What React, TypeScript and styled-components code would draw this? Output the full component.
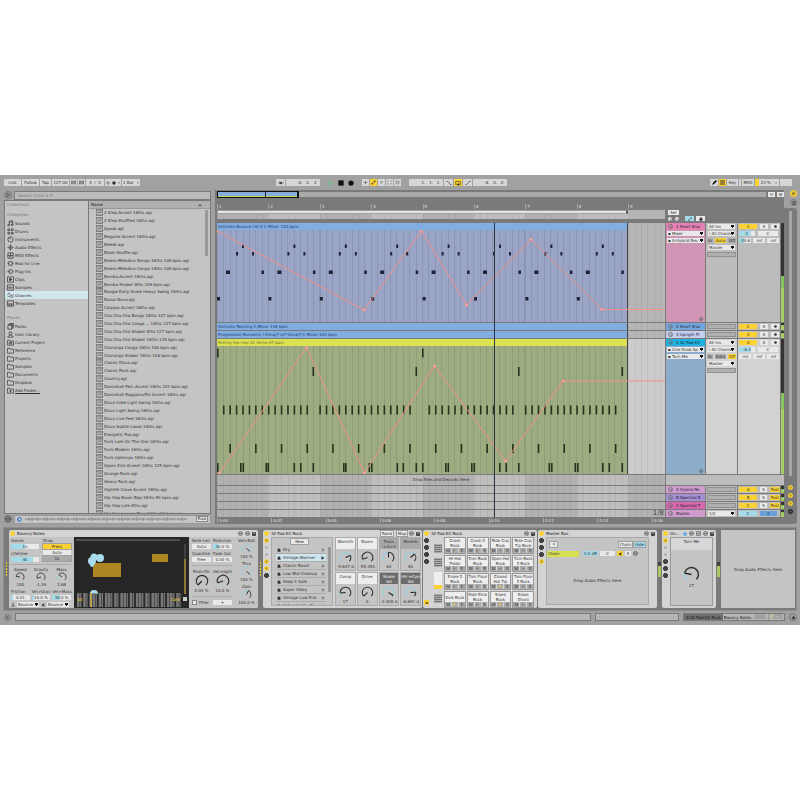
import React from "react";
import styled, { createGlobalStyle, css } from "styled-components";

const C = {
  chrome: "#a1a1a1",
  dark: "#7a7a7a",
  panel: "#c4c4c4",
  control: "#d6d6d6",
  field: "#e9e9e9",
  ink: "#303030",
  yellow: "#fad233",
  cyan: "#a3dbea",
  auto: "#f3918a",
};

const Global = createGlobalStyle`
  * { box-sizing: border-box; }
  body { margin: 0; background: #fff; font-family: "DejaVu Sans", Inter, sans-serif; font-size: 4px; line-height: 5px; color: ${C.ink}; text-rendering: geometricPrecision; }
  button, input, select { font: inherit; color: inherit; text-rendering: inherit; margin: 0; padding: 0; border: 0; border-radius: 0; background: none; min-width: 0; }
  select { appearance: none; }
  ul { list-style: none; margin: 0; padding: 0; }
  svg { display: block; flex: none; }
`;

const Page = styled.div`
  min-height: 100vh;
  display: flex;
  flex-direction: column;
  justify-content: center;
`;
const Shell = styled.main`
  background: ${C.chrome};
  overflow: hidden;
`;

/* ---------- icons ---------- */
const icons: Record<string, React.ReactNode> = {
  sounds: <><path d="M5 12V3l8-1v9M5 5l8-1" /><circle cx="3.5" cy="12" r="2" /><circle cx="11.5" cy="11" r="2" /></>,
  drums: <><path d="M2 2h4v4H2zM10 2h4v4h-4zM2 10h4v4H2zM10 10h4v4h-4z" /></>,
  instruments: <><circle cx="8" cy="8" r="6" /><path d="M8 8L5 3" /></>,
  audio: <><path d="M1 8h3M5 4v8M8 1v14M11 4v8M12 8h3" /></>,
  midi: <><path d="M2 2h12v12H2zM2 8h12M8 2v6M5 11h5" /></>,
  max: <><path d="M4 4h8v8H4zM1 8h3M12 8h3" /></>,
  plug: <><path d="M5 4h4a4 4 0 010 8H5zM1 8h4M13 8h2" /></>,
  clips: <><path d="M1 2h14v12H1z" /><path d="M6 5l5 3-5 3z" fill="currentColor" /></>,
  samples: <><path d="M1 2h14v12H1zM4 7v3M6.500 5v6M9 6v5M12 7v3" /></>,
  grooves: <><path d="M1 6c3-4 5-4 7 0s4 3 7-1M1 12c3-4 5-3 7-1s4 2 7-1" /></>,
  templates: <><path d="M1 2h14v12H1zM1 9h14M5 9v5M10 9v5" /></>,
  packs: <><path d="M2 5h9v9H2zM4 5V3h9v9h-2M6 3V1h9v8h-2" /></>,
  user: <><circle cx="8" cy="5" r="3.500" /><path d="M2 14c0-6 12-6 12 0z" /></>,
  project: <><path d="M1 3h5l1 2h8v9H1zM5 8h6v3H5z" /></>,
  folder: <><path d="M1 3h5l1 2h8v9H1z" /></>,
  addFolder: <><path d="M1 3h5l1 2h8v9H1zM8 7v5M5.500 9.500h5" /></>,
  groove: <><path d="M0 2h16v12H0zM3 9l2.500-2L8 9l2.500-3L13 8" /></>,
  play: <path d="M5 3l8 5-8 5z" />,
  playFill: <path d="M2 1l12 7-12 7z" fill="currentColor" stroke="none" />,
  down: <path d="M2 4h12l-6 9z" fill="currentColor" stroke="none" />,
  up: <path d="M3 11l5-7 5 7z" />,
  circle: <circle cx="8" cy="8" r="5" fill="none" />,
  dot: <circle cx="8" cy="8" r="7" fill="currentColor" stroke="none" />,
  square: <path d="M1 1h14v14H1z" fill="currentColor" stroke="none" />,
  disk: <><path d="M1 1h14v14H1z" fill="currentColor" /><path d="M6 3h5v4H6z" fill="#fff" stroke="none" /></>,
  swap: <><circle cx="8" cy="8" r="6.500" /><path d="M4 8h8M6 5L4 8l2 3M10 5l2 3-2 3" /></>,
  follow: <><path d="M1 8h14M5 4v8M9 5L5 8l4 3z" fill="currentColor" /></>,
  plus: <path d="M8 3v10M3 8h10" />,
  automation: <><path d="M3 13L13 4" /><circle cx="4" cy="12" r="2" /><circle cx="12" cy="4" r="2" /></>,
  minus: <path d="M4 6h8M5 10h4" />,
  dashed: <path d="M2 5V3h3M11 3h3v2M2 11v2h3M11 13h3v-2" />,
  punchIn: <path d="M1 4h4l6 8h4" />,
  punchOut: <path d="M1 12h4l6-8h4" />,
  loop: <><path d="M5 12H2V4h12v8H9" /><path d="M10 9l-4 3 4 3z" fill="currentColor" /></>,
  pencil: <path d="M2 14l2-5 8-8 3 3-8 8z" fill="currentColor" />,
  keys: <path d="M1 2h14v12H1zM5 2v12M8 2v12M11 2v12" />,
  nudge: <path d="M2 2v12M6 2v12M10 2v12M14 2v12" />,
  lines: <path d="M3 4h10M3 8h10M3 12h10" />,
  lock: <path d="M3 7h10v7H3zM5 7V3h6v4" fill="currentColor" />,
  home: <path d="M8 3l5 9H3z" fill="currentColor" />,
  headphone: <path d="M5 6h3l4-4v12l-4-4H5z" fill="currentColor" />,
};
const Icon = ({ name, size = 5, weight = 1.6 }: { name: string; size?: number; weight?: number }) => (
  <svg width={size} height={size} viewBox="0 0 16 16" fill="none" stroke="currentColor" strokeWidth={weight} aria-hidden="true">
    {icons[name]}
  </svg>
);

const RoundButton = styled.button<{ $bg?: string; $fg?: string; $size?: number }>`
  width: ${(p) => p.$size ?? 5}px;
  height: ${(p) => p.$size ?? 5}px;
  flex: none;
  border-radius: 50%;
  display: grid;
  place-items: center;
  background: ${(p) => p.$bg ?? "transparent"};
  color: ${(p) => p.$fg ?? C.ink};
  border: 1px solid ${(p) => p.$bg ?? "#777"};
`;

/* ---------- transport ---------- */
const Transport = styled.header`
  display: grid;
  grid-template-columns: 272fr 434fr 86fr;
  align-items: center;
  height: 15px;
  padding: 0 4px;
`;
const Group = styled.div<{ $gap?: number; $left?: number }>`
  display: flex;
  align-items: center;
  gap: ${(p) => p.$gap ?? 1}px;
  margin-left: ${(p) => p.$left ?? 0}px;
`;
const Tool = styled.button<{ $w: number; $on?: boolean; $bare?: boolean; $fg?: string }>`
  width: ${(p) => p.$w}px;
  height: 7px;
  flex: none;
  display: flex;
  align-items: center;
  justify-content: center;
  gap: 2px;
  white-space: pre;
  color: ${(p) => p.$fg ?? C.ink};
  background: ${(p) => (p.$bare ? "transparent" : p.$on ? C.yellow : C.control)};
`;

const TransportBar = () => (
  <Transport>
    <Group>
      <Tool $w={17}>Link</Tool>
      <Tool $w={17}>Follow</Tool>
      <Tool $w={11}>Tap</Tool>
      <Tool $w={17}>127.00</Tool>
      <Tool $w={7} aria-label="Nudge down"><Icon name="nudge" weight={2} /></Tool>
      <Tool $w={7} aria-label="Nudge up"><Icon name="nudge" weight={2} /></Tool>
      <Tool $w={18}>4  /  4</Tool>
      <Tool $w={16} aria-label="Metronome"><Icon name="circle" size={4} weight={2} /><Icon name="dot" size={4} /><Icon name="down" size={2} /></Tool>
      <Tool $w={18}>1 Bar <Icon name="down" size={2} /></Tool>
    </Group>
    <Group $gap={8}>
      <Group>
        <Tool $w={9} aria-label="Follow arrow"><Icon name="follow" size={6} /></Tool>
        <Tool $w={34}>       6.   2.   3</Tool>
      </Group>
      <Group $gap={4}>
        <Tool $w={6} $bare $fg="#79c093" aria-label="Play"><Icon name="playFill" size={6} /></Tool>
        <Tool $w={6} $bare $fg="#111" aria-label="Stop"><Icon name="square" size={6} /></Tool>
        <Tool $w={6} $bare $fg="#111" aria-label="Record"><Icon name="dot" size={6} /></Tool>
      </Group>
      <Group>
        {["plus", "automation", "minus", "dashed", "circle"].map((n) => (
          <Tool key={n} $w={7} $on={n === "automation"} aria-label={n}><Icon name={n} /></Tool>
        ))}
      </Group>
      <Group>
        <Tool $w={34}>       1.   1.   1</Tool>
        <Tool $w={9} aria-label="Punch in"><Icon name="punchIn" size={6} /></Tool>
        <Tool $w={8} $on aria-label="Loop"><Icon name="loop" size={6} /></Tool>
        <Tool $w={9} aria-label="Punch out"><Icon name="punchOut" size={6} /></Tool>
        <Tool $w={34}>       8.   0.   0</Tool>
      </Group>
    </Group>
    <Group>
      <Tool $w={8} $fg="#111" aria-label="Draw"><Icon name="pencil" /></Tool>
      <Tool $w={7} $on aria-label="Keyboard"><Icon name="keys" /></Tool>
      <Tool $w={11}>Key</Tool>
      <Tool $w={2} aria-label="In" />
      <Tool $w={12}>MIDI</Tool>
      <Group $gap={0}>
        <Tool $w={4} $on aria-label="Load" />
        <Tool $w={20}>23 %  <Icon name="down" size={2} /></Tool>
      </Group>
      <Tool $w={12} aria-label="Disk" />
    </Group>
  </Transport>
);

/* ---------- browser ---------- */
const Main = styled.div`
  display: flex;
  padding-left: 4px;
`;
const Browser = styled.aside`
  flex: 0 0 207px;
  min-width: 0;
  display: flex;
  flex-direction: column;
  margin-right: 4px;
`;
const SearchRow = styled.div`
  display: flex;
  align-items: center;
  gap: 2px;
  height: 10px;
`;
const SearchInput = styled.input`
  flex: 1;
  height: 9px;
  padding: 0 3px;
  border: 1px solid ${C.dark};
  background: #bcbcbc;
  &::placeholder { color: #777; }
`;
const BrowserPanel = styled.div`
  flex: 1;
  min-height: 0;
  display: grid;
  grid-template-columns: 84px minmax(0, 1fr);
  border: 1px solid ${C.dark};
  background: ${C.panel};
`;
const Sidebar = styled.nav`
  border-right: 1px solid ${C.dark};
  padding-left: 2px;
`;
const SideHead = styled.div<{ $top?: number }>`
  height: 8px;
  line-height: 8px;
  margin-top: ${(p) => p.$top ?? 0}px;
  color: #777;
`;
const SideItem = styled.button<{ $on?: boolean; $link?: boolean }>`
  display: flex;
  align-items: center;
  gap: 1px;
  width: calc(100% + 2px);
  height: 8px;
  margin-left: -2px;
  padding-left: 2px;
  background: ${(p) => (p.$on ? "#d3e6ed" : "transparent")};
  text-decoration: ${(p) => (p.$link ? "underline" : "none")};
`;
const FileColumn = styled.div`
  display: flex;
  flex-direction: column;
  min-height: 0;
`;
const ColumnHead = styled.div`
  display: flex;
  align-items: center;
  justify-content: space-between;
  height: 8px;
  padding: 0 8px 0 2px;
  background: #b0b0b0;
  border-bottom: 1px solid #999;
  color: #111;
`;
const FileArea = styled.div`
  flex: 1 1 0;
  min-height: 0;
  display: grid;
  grid-template-columns: minmax(0, 1fr) 3px;
  overflow: hidden;
  padding-right: 2px;
`;
const FileList = styled.ul`
  display: grid;
  grid-auto-rows: minmax(0, 1fr);
  margin-bottom: -4px;
  min-height: 0;
`;
const FileItem = styled.li`
  display: flex;
  align-items: center;
  gap: 1px;
  padding-left: 7px;
  white-space: nowrap;
`;
const Thumb = styled.div<{ $h: string }>`
  height: ${(p) => p.$h};
  margin-top: 1px;
  background: #989898;
`;
const Preview = styled.div`
  display: flex;
  align-items: center;
  gap: 2px;
  height: 10px;
  & > div { flex: 1; min-width: 0; display: flex; align-items: center; gap: 3px; height: 9px; padding: 0 2px; background: ${C.panel}; border: 1px solid #999; }
`;
const Raw = styled.button`
  width: 12px;
  height: 6px;
  flex: none;
  margin-left: auto;
  background: ${C.field};
  border: 1px solid #888;
  line-height: 4px;
`;

const categories = [["sounds", "Sounds"], ["drums", "Drums"], ["instruments", "Instruments"], ["audio", "Audio Effects"], ["midi", "MIDI Effects"], ["max", "Max for Live"], ["plug", "Plug-Ins"], ["clips", "Clips"], ["samples", "Samples"], ["grooves", "Grooves"], ["templates", "Templates"]];
const places = [["packs", "Packs"], ["user", "User Library"], ["project", "Current Project"], ["folder", "Reference"], ["folder", "Projects"], ["folder", "Samples"], ["folder", "Documents"], ["folder", "Dropbox"], ["addFolder", "Add Folder..."]];
const files = ["2 Step Accent 16ths", "2 Step Shuffled 16ths", "Ayoub", "Beguine Accent 16ths", "Beledi", "Blues Shuffle", "Bolero Melodico Bongo 16ths 106 bpm", "Bolero Melodico Conga 16ths 106 bpm", "Bomba Accent 16ths", "Bomba Shaker 8ths 109 bpm", "Boogie Early Snare Heavy Swing 16ths", "Bossa Nova", "Calypso Accent 16ths", "Cha-Cha-Cha Bongo 16ths 127 bpm", "Cha-Cha-Cha Conga ... 16ths 127 bpm", "Cha-Cha-Cha Shaker 8ths 127 bpm", "Cha-Cha-Cha Shaker 16ths 128 bpm", "Charanga Conga 16ths 106 bpm", "Charanga Shaker 16ths 106 bpm", "Classic Disco", "Classic Rock", "Country", "Dancehall Perc Accent 16ths 101 bpm", "Dancehall Raggamuffin Accent 16ths", "Disco Indie Light Swing 16ths", "Disco Light Swing 16ths", "Disco Live Feel 16ths", "Disco Subtle Loose 16ths", "Energetic Pop", "Funk Late On The One 16ths", "Funk Modern 16ths", "Funk Uptempo 16ths", "Gqom Kick Accent 16ths 125 bpm", "Grunge Rock", "Heavy Rock", "Highlife Clave Accent 16ths", "Hip Hop Boom Bap 16ths 90 bpm", "Hip Hop Late 8ths", "Hip Hop Legacy Flow 16ths 90 bpm"];

const wave = Array.from({ length: 54 }, (_, i) => `M${i * 3 + 1} ${4 - ((i * 7) % 5) / 2.5}v${((i * 7) % 5) / 1.25 + 0.5}`).join("");

const BrowserPane = () => (
  <Browser>
    <SearchRow>
      <RoundButton $size={8} aria-label="Toggle browser"><Icon name="play" size={6} /></RoundButton>
      <SearchInput aria-label="Search" placeholder="Search (Cmd + F)" />
    </SearchRow>
    <BrowserPanel>
      <Sidebar>
        <SideHead>Collections</SideHead>
        <SideHead $top={2}>Categories</SideHead>
        {categories.map(([i, t]) => <SideItem key={t} $on={t === "Grooves"}><Icon name={i} size={7} />{t}</SideItem>)}
        <SideHead $top={7}>Places</SideHead>
        {places.map(([i, t]) => <SideItem key={t} $link={i === "addFolder"}><Icon name={i} size={7} />{t}</SideItem>)}
      </Sidebar>
      <FileColumn>
        <ColumnHead>Name<Icon name="up" size={4} /></ColumnHead>
        <FileArea>
          <FileList>{files.map((f) => <FileItem key={f}><Icon name="groove" size={7} />{f}.agr</FileItem>)}</FileList>
          <Thumb $h="15%" />
        </FileArea>
      </FileColumn>
    </BrowserPanel>
    <Preview>
      <RoundButton $size={8} aria-label="Preview"><Icon name="swap" size={6} /></RoundButton>
      <div>
        <RoundButton $bg="#4f7fc9" $fg="#fff" aria-label="Preview on"><Icon name="headphone" size={3} /></RoundButton>
        <svg width="162" height="8" viewBox="0 0 162 8"><path d="M0 4h162" stroke="#777" strokeWidth="0.600" /><path d={wave} stroke="#666" strokeWidth="0.700" /></svg>
        <Raw>Raw</Raw>
      </div>
    </Preview>
  </Browser>
);

/* ---------- arrangement ---------- */
const Arrangement = styled.section`
  flex: 1;
  min-width: 0;
  position: relative;
  display: flex;
  flex-direction: column;
  gap: 1px;
  padding: 0 0 1px 2px;
  background: ${C.dark};
`;
const OverviewRow = styled.div`
  display: flex;
  align-items: center;
  gap: 1px;
  height: 8px;
`;
const Overview = styled.div`
  flex: 1;
  height: 5px;
  background: #a9a9a9;
  & > div { width: 15%; height: 7px; margin-top: -1px; border: 1px solid #111; background: linear-gradient(#86add9 0 70%, #c9d65c 70%); border-right-width: 2px; display: grid; place-items: stretch center; }
  & > div > i { width: 1px; margin-left: 20%; background: #223; }
`;
const MiniButton = styled.button<{ $w?: number; $bg?: string; $fg?: string; $border?: boolean }>`
  width: ${(p) => (p.$w ? `${p.$w}px` : "auto")};
  height: 5px;
  flex: none;
  line-height: 5px;
  display: flex;
  align-items: center;
  justify-content: center;
  white-space: nowrap;
  color: ${(p) => p.$fg ?? C.ink};
  background: ${(p) => p.$bg ?? C.field};
  box-shadow: 0 0 0 ${(p) => (p.$border ? 1 : 0)}px #a0a0a0;
`;
const Split = styled.div<{ $h: number }>`
  display: grid;
  grid-template-columns: minmax(0, 1fr) 118px;
  gap: 1px;
  min-height: ${(p) => p.$h}px;
`;
const zebra = css`
  background-image:
    repeating-linear-gradient(90deg, rgba(0,0,0,0.06) 0 1px, transparent 1px 1.434%),
    repeating-linear-gradient(90deg, rgba(0,0,0,0.05) 0 11.47%, rgba(255,255,255,0.06) 11.47% 22.94%);
`;
const Lane = styled.div<{ $light?: boolean }>`
  position: relative;
  display: grid;
  grid-template-columns: 411fr 37fr;
  background-color: ${(p) => (p.$light ? "#cccccc" : "#b6b6b6")};
  background-image: repeating-linear-gradient(90deg, rgba(0,0,0,0.06) 0 1px, transparent 1px 1.434%);
`;
const ZebraLane = styled.div`
  background-color: #bababa;
  ${zebra}
  text-align: center;
  line-height: 10px;
`;
const Ruler = styled.div<{ $step: number }>`
  display: grid;
  grid-auto-flow: column;
  grid-auto-columns: ${(p) => p.$step}%;
  align-items: end;
  overflow: hidden;
  color: #e2e2e2;
  & > span { border-left: 1px solid #a5a5a5; padding-left: 1px; line-height: 5px; height: 5px; white-space: nowrap; }
`;
const LoopLane = styled.div`
  display: grid;
  grid-template-columns: 411fr 37fr;
  grid-template-rows: 4px 5px;
  & > div:nth-child(1) { background: #e3e3e3; border: 1px solid #a0a0a0; border-right: 2px solid #555; }
  & > div:nth-child(2) { background: #b4b4b4; grid-row: 1 / 3; grid-column: 2; }
  & > div:nth-child(3) { background-color: #bababa; ${zebra} background-size: 109% 100%; }
`;
const HeadTools = styled.div`
  display: flex;
  flex-direction: column;
  gap: 1px;
  padding-left: 2px;
`;
const Clip = styled.div<{ $body: string; $title: string; $fg: string }>`
  display: grid;
  grid-template-rows: 7px 1fr;
  background: ${(p) => p.$body};
  border-right: 1px solid #444;
  color: ${(p) => p.$fg};
  background-image: repeating-linear-gradient(90deg, rgba(20,30,60,0.11) 0 1px, transparent 1px 1.5625%);
  & > div { background: ${(p) => p.$title}; line-height: 7px; padding-left: 1px; white-space: nowrap; overflow: hidden; }
`;
const LaneDrawing = styled.svg`
  position: absolute;
  inset: 7px 0 0 0;
  width: 100%;
  height: calc(100% - 7px);
`;
const Playhead = styled.div`
  position: absolute;
  top: 33px;
  bottom: 7px;
  left: calc(2px + (100% - 121px) * 0.619);
  width: 1px;
  background: #2b3440;
`;
const GridSize = styled.div`
  position: absolute;
  right: 120px;
  bottom: 7px;
  font-size: 7px;
  line-height: 8px;
  color: #444;
`;

type Pt = [number, number];
const Automation = ({ points }: { points: Pt[] }) => (
  <>
    <polyline points={points.map((p) => p.join(",")).join(" ")} fill="none" stroke={C.auto} strokeWidth="1" vectorEffect="non-scaling-stroke" />
    {points.slice(0, -1).map(([x, y]) => <circle key={x} cx={x} cy={y} r="1.300" fill="#f6aca4" stroke={C.auto} strokeWidth="0.500" />)}
  </>
);
const BAR = 51.4;
const bounce = Array.from({ length: 8 }, (_, b) => {
  const x = b * BAR;
  return [[x, 67, 3, 3.5], [x + 9, 40.5, 4, 3.5], [x + 19, 22, 2, 3.5], [x + 25, 14.500, 2, 3.500], [x + 35, 22, 2, 3.500], [x + 44.500, 40.500, 2.500, 3.500]];
}).flat();
const range = (a: number, b: number, step = 1) => Array.from({ length: Math.floor((b - a) / step) + 1 }, (_, i) => a + i * step);
const S = 6.425;
const drums = [
  ...[0, 205].map((x) => [x, 2.5]),
  ...[95.5, 198.5, 301, 404.5].map((x) => [x, 21]),
  ...[...range(1, 14), ...range(16, 30), ...range(33, 46), ...range(48, 62)].map((i) => [i * S - 0.5, 59.5]),
  ...range(2, 62, 4).map((i) => [i * S - 0.5, 98]),
  ...[0, 23, 25.500, 48.500, 50.500, 76.500, 83, 95.500, 126, 128, 151.500, 154, 179.500, 185.500, 198.500, 205, 228, 230.500, 254, 256.500, 282, 288.500, 301, 331.500, 334, 357.500, 360, 385, 391.500, 404.500].map((x) => [x, 117]),
];

const TrackHead = styled.div`
  display: grid;
  grid-template-columns: 39px 31px minmax(0, 1fr) 3px;
  gap: 1px;
`;
const NameCell = styled.div<{ $bg: string; $title: string }>`
  display: flex;
  flex-direction: column;
  gap: 2px;
  background: ${(p) => p.$bg};
  & > header { display: flex; align-items: center; gap: 3px; height: 7px; margin-bottom: -1px; padding-left: 2px; background: ${(p) => p.$title}; white-space: nowrap; overflow: hidden; color: #23232f; }
  & > footer { margin-top: auto; align-self: flex-end; padding: 0 2px 1px; }
`;
const Cell = styled.div<{ $bg?: string }>`
  display: flex;
  flex-direction: column;
  gap: 2px;
  padding: 1px;
  background: ${(p) => p.$bg ?? "#bcbcbc"};
`;
const Line = styled.div`
  display: grid;
  grid-template-columns: 6fr 11fr 8fr;
  gap: 2px;
`;
const Choice = styled.select<{ $w?: number }>`
  width: ${(p) => (p.$w ? `${p.$w}px` : "auto")};
  height: 5px;
  line-height: 5px;
  padding-left: 1px;
  margin: 0 1px;
  background-color: ${C.field};
  background-image: conic-gradient(from -35deg at 50% 100%, #111 0 70deg, transparent 70deg);
  background-position: right 1px center;
  background-size: 3px 3px;
  background-repeat: no-repeat;
`;
const Slot = styled.div`
  height: 5px;
  background: #b0b0b0;
  border: 1px solid #909090;
`;
const Meter = styled.div<{ $level: number }>`
  background: linear-gradient(#333 0 ${(p) => 100 - p.$level}%, #86c45f ${(p) => 100 - p.$level}% ${(p) => 112 - p.$level}%, #a8cf63 ${(p) => 112 - p.$level}%);
`;

const Pick = ({ label, w }: { label: string; w?: number }) => (
  <Choice $w={w} aria-label={label} defaultValue={label}><option>{label}</option></Choice>
);

type TrackProps = { name: string; n: string; title: string; body?: string; sends?: string[]; light?: boolean; level: number; values?: string[]; post?: string; master?: boolean; off?: boolean };
const TrackControls = ({ name, n, title, body, sends, light, level, values, post, master, off }: TrackProps) => {
  const bg = light ? "#d2d2d2" : "#bcbcbc";
  return (
    <TrackHead>
      <NameCell $bg={body ?? title} $title={title}>
        <header><RoundButton aria-label={`Unfold ${name}`}><Icon name="down" size={2} /></RoundButton>{name}</header>
        {sends?.map((s) => <Pick key={s} label={s} />)}
        {sends && <footer><RoundButton $size={4} aria-label="Add lane"><Icon name="plus" size={3} /></RoundButton></footer>}
      </NameCell>
      <Cell $bg={bg}>
        {sends ? (
          <>
            <Pick label="All Ins" />
            <Pick label="⁞ All Channe" />
            <Line>
              <MiniButton $bg="#aaa">In</MiniButton>
              <MiniButton $bg={off ? "#aaa" : C.yellow}>Auto</MiniButton>
              <MiniButton $bg={off ? C.yellow : "#aaa"}>Off</MiniButton>
            </Line>
            <Pick label="Master" />
            <Slot />
          </>
        ) : master ? <Pick label="1/2" /> : <Slot />}
      </Cell>
      <Cell $bg={bg}>
        <Group $gap={3}>
          <MiniButton $w={18} $bg={master ? C.cyan : C.yellow}>{n}</MiniButton>
          {master ? <MiniButton $w={17} $bg="#6b9fdc">0</MiniButton> : (
            <><MiniButton $w={post ? 7 : 8}>S</MiniButton><MiniButton $w={post ? 10 : 8} $bg={post ? C.yellow : undefined} aria-label="Arm">{post ?? <Icon name="dot" size={3} />}</MiniButton></>
          )}
        </Group>
        {values && (
          <>
            <Group $gap={3}><MiniButton $w={16} $bg={`linear-gradient(90deg, ${C.cyan} 75%, ${C.field} 75%)`}>{values[0]}</MiniButton><MiniButton $w={20}>C</MiniButton></Group>
            <Group $gap={2}>{values.slice(1).map((v, i) => <MiniButton key={i} $w={12} $bg={i === 0 && v !== "-inf" ? `linear-gradient(90deg, ${C.cyan} 45%, ${C.field} 45%)` : undefined}>{v}</MiniButton>)}</Group>
          </>
        )}
      </Cell>
      <Meter $level={level} />
    </TrackHead>
  );
};

const ArrangementView = () => (
  <Arrangement>
    <OverviewRow>
      <Overview><div><i /></div></Overview>
      <Group $left={1}><MiniButton $w={7}>H</MiniButton><span /><MiniButton $w={7}>W</MiniButton></Group>
    </OverviewRow>
    <Split $h={10}>
      <Ruler $step={11.47}>{range(1, 9).map((n) => <span key={n}>{n}</span>)}</Ruler>
      <span />
    </Split>
    <Split $h={9}>
      <LoopLane><div /><div /><div /></LoopLane>
      <HeadTools>
        <Group><MiniButton $w={11}>Set</MiniButton></Group>
        <Group $gap={3}>
          <RoundButton $size={4} $bg={C.field} aria-label="Previous locator"><Icon name="play" size={3} /></RoundButton>
          <RoundButton $size={4} $bg={C.field} aria-label="Next locator"><Icon name="play" size={3} /></RoundButton>
          <Group $gap={2} $left={3}><MiniButton $w={9} $bg={C.cyan} aria-label="Automation mode"><Icon name="automation" size={4} /></MiniButton><MiniButton $w={9} aria-label="Lock envelopes"><Icon name="lock" size={4} /></MiniButton></Group>
        </Group>
      </HeadTools>
    </Split>
    <Split $h={0}><span /><span /></Split>
    <Split $h={99}>
      <Lane>
        <Clip $body="#9aa4c4" $title="#82ade0" $fg="#1c3a6e"><div>Ostinato Bounce I-VI-V C Minor 120 bpm</div></Clip>
        <LaneDrawing viewBox="0 0 448 92" preserveAspectRatio="none">
          {bounce.map(([x, y, w, h], i) => <rect key={i} x={x} y={y} width={w} height={h} fill="#1d2235" />)}
          <Automation points={[[0, 1], [147, 80], [204.500, 1], [249.500, 75], [314, 9.500], [385, 79.500], [448, 79.500]]} />
        </LaneDrawing>
      </Lane>
      <TrackControls name="1 Short Stac" n="1" title="#e57fb4" body="#d094b5" sends={["▪ Mixer", "▪ A-Hybrid Rev"]} level={46} values={["C", "-20.6", "-inf", "-inf"]} />
    </Split>
    <Split $h={7}>
      <Lane><Clip $body="#82ade0" $title="#82ade0" $fg="#1c3a6e"><div>Ostinato Twisting C Minor 138 bpm</div></Clip></Lane>
      <TrackControls name="2 Short Stac" n="2" title="#74a5dd" level={70} />
    </Split>
    <Split $h={7}>
      <Lane><Clip $body="#82ade0" $title="#82ade0" $fg="#1c3a6e"><div>Progression Romantic I-IIImaj7-iv7-VImaj7 C Minor 100 bpm</div></Clip></Lane>
      <TrackControls name="3 Upright Pi" n="3" title="#c3cdee" level={70} />
    </Split>
    <Split $h={135}>
      <Lane $light>
        <Clip $body="#9eac82" $title="#dbe256" $fg="#6f7620"><div>Rolling Hip Hop 02 Verse 87 bpm</div></Clip>
        <LaneDrawing viewBox="0 0 448 128" preserveAspectRatio="none">
          {drums.map(([x, y], i) => <rect key={i} x={x} y={y} width="1.600" height="9" fill="#26331c" />)}
          <Automation points={[[2.500, 127], [89.500, 1.500], [147.500, 127], [217.500, 20], [288.500, 115], [346, 35], [448, 35]]} />
        </LaneDrawing>
      </Lane>
      <TrackControls name="4 32 Pad Kit" n="4" title="#1fb1e0" body="#8caccb" light sends={["▪ One Knob Sp", "▪ Turn Me"]} level={60} values={["-6.3", "-inf", "-inf", "-inf"]} off />
    </Split>
    <Split $h={10}>
      <ZebraLane>Drop Files and Devices Here</ZebraLane>
      <Cell />
    </Split>
    <Split $h={7}><ZebraLane /><TrackControls name="A Hybrid Re" n="A" title="#cf9bd1" level={60} post="Post" /></Split>
    <Split $h={7}><ZebraLane /><TrackControls name="B Spectral R" n="B" title="#a58fd0" level={60} post="Post" /></Split>
    <Split $h={7}><ZebraLane /><TrackControls name="C Spectral T" n="C" title="#d667ad" level={60} post="Post" /></Split>
    <Split $h={7}><ZebraLane /><TrackControls name="Master" n="C" title="#d09bcd" level={70} master /></Split>
    <Split $h={5}>
      <Ruler $step={12.13}>{["0:00", "0:02", "0:04", "0:06", "0:08", "0:10", "0:12", "0:14", "0:16"].map((t) => <span key={t}>{t}</span>)}</Ruler>
      <span />
    </Split>
    <Playhead />
    <GridSize>1/8</GridSize>
  </Arrangement>
);

const SideStrip = styled.div`
  flex: 0 0 16px;
  display: flex;
  flex-direction: column;
  align-items: flex-end;
  padding: 0 3px 0 0;
  gap: 2px;
`;
const SideTrack = styled.div`
  flex: 1;
  align-self: stretch;
  display: flex;
  flex-direction: column;
  align-items: center;
  gap: 3px;
  padding: 3px 0 10px;
  background: ${C.dark};
  border-radius: 0 3px 3px 0;
  & > i { flex: 1; width: 3px; margin-bottom: 6px; background: #a5a5a5; }
`;

/* ---------- devices ---------- */
const DeviceView = styled.section`
  display: flex;
  gap: 1px;
  margin: 3px 3px 2px;
  padding: 2px 1px;
  min-height: 83px;
  background: ${C.dark};
  border: 1px solid #8e8e8e;
`;
const Device = styled.article<{ $w: number }>`
  width: ${(p) => p.$w}px;
  flex: none;
  display: flex;
  flex-direction: column;
  background: #d3d3d3;
  border-radius: 2px;
  overflow: hidden;
`;
const DeviceHead = styled.header`
  display: flex;
  align-items: center;
  gap: 2px;
  height: 7px;
  padding: 0 2px 0 1px;
  white-space: nowrap;
  & > b { flex: 1; font-weight: 400; color: #111; }
`;
const Bounce = styled.div`
  flex: 1;
  display: grid;
  grid-template-columns: 64px 115px 1fr 23px;
  gap: 1px;
  background: ${C.panel};
`;
const Stack = styled.div<{ $gap?: number; $pad?: string; $line?: boolean }>`
  display: flex;
  flex-direction: column;
  min-width: 0;
  gap: ${(p) => p.$gap ?? 1}px;
  padding: ${(p) => p.$pad ?? "0"};
  border-bottom: ${(p) => (p.$line ? "1px solid #aaa" : "0")};
`;
const Cols = styled.div<{ $n: number; $gap?: number }>`
  display: grid;
  grid-template-columns: repeat(${(p) => p.$n}, minmax(0, 1fr));
  gap: ${(p) => p.$gap ?? 2}px;
`;
const Param = styled.label`
  display: flex;
  flex-direction: column;
  gap: 1px;
  white-space: nowrap;
`;
const CheckLabel = styled.label`
  display: flex;
  align-items: center;
  gap: 2px;
`;
const ParamInput = styled.input<{ $fill?: number }>`
  width: 100%;
  height: 5px;
  line-height: 5px;
  text-align: center;
  border: 0;
  background: linear-gradient(90deg, ${C.cyan} ${(p) => p.$fill ?? 0}%, ${C.field} ${(p) => p.$fill ?? 0}%);
`;
const Value = ({ label, value, fill }: { label: string; value: string; fill?: number }) => (
  <Param>{label}<ParamInput defaultValue={value} $fill={fill} /></Param>
);
const KnobBox = styled.label`
  display: flex;
  flex-direction: column;
  align-items: center;
  white-space: nowrap;
  & > div { position: relative; }
  input { position: absolute; inset: 0; width: 100%; height: 100%; opacity: 0; }
`;
const polar = (a: number, r = 6.5): Pt => [8 + r * Math.sin((a * Math.PI) / 180), 8 - r * Math.cos((a * Math.PI) / 180)];
const arc = (from: number, to: number) => {
  const [x1, y1] = polar(from);
  const [x2, y2] = polar(to);
  return `M${x1} ${y1}A6.5 6.5 0 ${to - from > 180 ? 1 : 0} 1 ${x2} ${y2}`;
};
const Knob = ({ label, value, at, size = 11 }: { label?: string; value: string; at: number; size?: number }) => {
  const a = -135 + at * 270;
  const [x, y] = polar(a);
  return (
    <KnobBox>
      {label}
      <div>
        <svg width={size} height={size} viewBox="0 0 16 16" fill="none" strokeWidth="1.300">
          {at > 0.02 && <path d={arc(-135, a)} stroke="#8ed0e0" />}
          {at < 0.98 && <path d={arc(a, 135)} stroke="#333" />}
          <path d={`M8 8L${x} ${y}`} stroke="#222" />
        </svg>
        <input type="range" min="0" max="1" step="any" defaultValue={at} aria-label={label ?? value} />
      </div>
      {value}
    </KnobBox>
  );
};
const LevelStrip = styled.div<{ $midi?: boolean }>`
  width: 3px;
  flex: none;
  align-self: center;
  height: 15px;
  background: ${(p) => (p.$midi ? `repeating-linear-gradient(${C.yellow} 0 2px, #665 2px 3px) center / 1px 100% no-repeat` : "linear-gradient(#444 0 25%, #a8c860 25%)")};
`;
const Dots = styled.div`
  display: flex;
  flex-direction: column;
  align-items: center;
  gap: 2px;
  padding: 1px;
`;
const DotColumn = ({ colors }: { colors: string[] }) => (
  <Dots>{colors.map((c, i) => <RoundButton key={i} $bg={c} $fg={c === "#222" ? "#ddd" : C.ink} aria-label={`View ${i + 1}`}><Icon name={c === C.yellow ? "lines" : "circle"} size={3} /></RoundButton>)}</Dots>
);
const HeadIcons = ({ pair }: { pair?: boolean }) => <>{pair && <Icon name="swap" />}<Icon name="swap" /><Icon name="disk" size={4} /></>;

const BounceDisplay = () => (
  <svg width="115" height="71" viewBox="0 0 115 71">
    <path d="M0 0h115v71H0z" fill="#262626" />
    <path d="M2 3h104" stroke="#777" />
    <path d="M111 7v50" stroke="#777" strokeWidth="0.700" /><path d="M111 22v35" stroke="#d8a92b" />
    <path d="M19 26h28v14H19zM78 17h16v8H78z" fill="#ae8523" />
    <g fill="#a9dcec"><circle cx="18" cy="24" r="4" /><circle cx="20" cy="20" r="3.500" /><circle cx="26" cy="21" r="4" /><circle cx="18" cy="28" r="2" /><path d="M16 57a4 4 0 018 0z" /></g>
    {range(0, 33).map((i) => <path key={i} d={`M${3 + i * 3.1} 56h${[1, 3].includes(i % 5) ? 1.3 : 2.6}v14h-${[1, 3].includes(i % 5) ? 1.3 : 2.6}z`} fill="#777" />)}
    <path d="M17 56v14" stroke={C.yellow} />
    <text x="3" y="64" fontSize="4" fill={C.yellow}>G0</text><text x="97" y="64" fontSize="4" fill={C.yellow}>C#8</text>
    <path d="M109 60h4v4h-4z" fill="#ccc" />
  </svg>
);
const Check = styled.input`
  appearance: none;
  width: 5px;
  height: 5px;
  background: ${C.field};
  border: 1px solid #888;
`;

const BouncyNotes = () => (
  <Device $w={249}>
    <DeviceHead><RoundButton $bg={C.yellow} aria-label="Device on" /><b>Bouncy Notes</b><HeadIcons pair /></DeviceHead>
    <Bounce>
      <Stack $gap={2} $pad="1px 2px">
        <Cols $n={2} $gap={4}>
          <Stack $gap={2}><Value label="Voices" value="1n" fill={50} /><Value label="Lifetime" value="4k" fill={80} /></Stack>
          <Stack>
            Drop
            <MiniButton $bg={C.yellow} $border>Press</MiniButton>
            <MiniButton>Auto</MiniButton>
            <MiniButton $bg="#aaa" $border>1k</MiniButton>
          </Stack>
        </Cols>
        <Stack $line />
        <Cols $n={3}>
          <Knob label="Speed" value="100" at={0.2} size={10} />
          <Knob label="Gravity" value="-1.19" at={0.1} size={10} />
          <Knob label="Mass" value="2.68" at={0.3} size={10} />
        </Cols>
        <Cols $n={3}>
          <Value label="Friction" value="0.01" fill={8} />
          <Value label="Vel>Grav" value="10.0 %" fill={10} />
          <Value label="Vel>Mass" value="30.0 %" fill={40} />
        </Cols>
        <Group $gap={1}><Icon name="user" size={4} /><Pick label="Bounce" w={22} /><Icon name="headphone" size={4} /><Pick label="Bounce" w={22} /></Group>
      </Stack>
      <BounceDisplay />
      <Stack $gap={3} $pad="1px 2px">
        <Cols $n={2}>
          <Stack $gap={2}><Value label="Note Len" value="Auto" /><Value label="Quantize" value="Free" /></Stack>
          <Stack $gap={2}><Value label="Rnd>Len" value="30.0 %" fill={30} /><Value label="Fade Out" value="0.00 %" /></Stack>
        </Cols>
        <Stack $line />
        <Cols $n={2}>
          <Knob label="Rnd>Dir" value="0.00 %" at={0} size={14} />
          <Knob label="Vel>Hght" value="10.0 %" at={0.1} size={14} />
        </Cols>
        <Stack $line />
        <Cols $n={2}>
          <CheckLabel><Check type="checkbox" />Filter</CheckLabel>
          <MiniButton>+</MiniButton>
        </Cols>
      </Stack>
      <Stack $gap={2} $pad="1px 0">
        <Knob label="Vel>Ball" value="100 %" at={0.98} />
        <Knob label="Thru" value="100 %" at={0.98} />
        <Knob label="Gain" value="100.0 %" at={0.6} />
      </Stack>
    </Bounce>
  </Device>
);

const RackBody = styled.div`
  flex: 1;
  display: flex;
  gap: 1px;
  min-height: 0;
`;
const Chains = styled.div`
  width: 62px;
  flex: none;
  display: flex;
  flex-direction: column;
  gap: 2px;
  padding: 1px 1px 0 4px;
  margin-bottom: 2px;
  border: 1px solid #aaa;
  background: ${C.panel};
`;
const ChainArea = styled.div`
  display: grid;
  grid-template-columns: minmax(0, 1fr) 3px;
  gap: 2px;
  height: 59px;
  overflow: hidden;
`;
const ChainRow = styled.li<{ $on?: boolean }>`
  display: flex;
  align-items: center;
  gap: 2px;
  height: 8px;
  padding: 0 1px;
  border-bottom: 1px solid #aaa;
  background: ${(p) => (p.$on ? "#cfe5ee" : "transparent")};
  white-space: nowrap;
  & > span { flex: 1; }
`;
const Macro = styled.div<{ $head: string; $fg?: string }>`
  display: flex;
  flex-direction: column;
  align-items: center;
  height: 34px;
  border: 1px solid #aaa;
  background: ${C.panel};
  & > header { width: 100%; height: 11px; padding-top: 1px; flex: none; text-align: center; background: ${(p) => p.$head}; color: ${(p) => p.$fg ?? C.ink}; white-space: pre; }
  & > label { margin-top: 2px; }
`;
const MacroGrid = styled.div`
  flex: 1;
  display: grid;
  grid-template-columns: repeat(4, minmax(0, 1fr));
  align-content: start;
  gap: 1px;
  padding: 0 1px;
`;
const macros: [string, string, number, string, string?][] = [
  ["Warmth", "-9.637 d", 0.75, "#ededed"], ["Boom", "-55.354", 0.1, "#ededed"], ["Trans\n-<0>+", "64", 0.5, "#a8a8a8"], ["Reverb", "80", 0.68, "#a8a8a8"],
  ["Comp", "17", 0.15, "#ededed"], ["Drive", "0", 0, "#ededed"], ["Snare\nVol", "-2.409 d", 0.95, "#6c6c6c", "#fff"], ["HH +Cym\nVol", "-6.691 d", 0.82, "#6c6c6c", "#fff"],
];
const KitRack = () => (
  <Device $w={159}>
    <DeviceHead><RoundButton $bg={C.yellow} aria-label="Device on" /><b>32 Pad Kit Rock</b><MiniButton $w={12} $border>Rand</MiniButton><span /><MiniButton $w={10} $border>Map</MiniButton><HeadIcons /></DeviceHead>
    <RackBody>
      <DotColumn colors={[C.yellow, "#d8d8d8", "#d8d8d8", C.yellow, C.yellow, "#222"]} />
      <Chains>
        <Group $gap={0} $left={15}><MiniButton $w={17} $border>New</MiniButton></Group>
        <ChainArea>
          <ul>{["Dry", "Vintage Warmer", "Classic Boost", "Low Mid Cleanup", "Keep It Safe", "Super Vibey", "Vintage Low End", "Saturated Lo-Fi"].map((t, i) => (
            <ChainRow key={t} $on={i === 1}><Icon name="lock" size={4} /><span>{t}</span><Icon name={i === 1 ? "playFill" : "play"} size={4} /></ChainRow>
          ))}</ul>
          <Thumb $h="70%" />
        </ChainArea>
      </Chains>
      <MacroGrid>
        {macros.map(([t, v, at, h, fg]) => <Macro key={t} $head={h} $fg={fg}><header>{t}</header><Knob value={v} at={at} size={13} /></Macro>)}
      </MacroGrid>
    </RackBody>
  </Device>
);

const PadGrid = styled.div`
  flex: 1;
  display: grid;
  grid-template-columns: repeat(4, minmax(0, 1fr));
  grid-auto-rows: 17px;
  align-content: start;
  gap: 1px;
  padding-right: 3px;
`;
const Pad = styled.div`
  display: flex;
  flex-direction: column;
  border: 1px solid #999;
  font-family: Inter, sans-serif;
  & > button:first-child { flex: 1; background: #eeeeee; line-height: 5px; white-space: pre; }
`;
const PadKeys = styled.div`
  display: grid;
  grid-template-columns: 1fr 1fr 1fr;
  gap: 1px;
  height: 5px;
`;
const PadKey = styled.button<{ $on?: boolean; $icon?: boolean }>`
  display: grid;
  place-items: center;
  background: #aaa;
  line-height: 5px;
  color: ${(p) => (p.$on ? C.yellow : p.$icon ? "#777" : C.ink)};
`;
const MiniPads = styled.div`
  width: 8px;
  flex: none;
  display: grid;
  grid-template-rows: 9px 9px 17px 9px;
  align-content: space-between;
  padding: 7px 0 5px;
  margin: 0 1px 0 3px;
  & > i { background: repeating-linear-gradient(#aaa 0 1px, transparent 1px 2px), repeating-linear-gradient(90deg, #888 0 1px, #666 1px 2px); }
  & > i:nth-child(3) { background: linear-gradient(#eee 0 75%, ${C.yellow} 75%); }
`;
const PushDown = styled.div`
  margin-top: auto;
  padding-bottom: 2px;
`;
const pads = ["Crash\nRock", "Crash 2\nRock", "Ride Cup\nRock", "Ride Cup\nTip Rock", "Hi-Hat\nPedal", "Tom Rack\nRock", "Open Hat\nRock", "Tom Rack\n2 Rock", "Snare 2\nRock", "Tom Floor\nRock", "Closed\nHat Tip", "Tom Floor\n2 Rock", "Kick Rock", "Side Stick\nRock", "Snare\nRock", "Snare\nGhost"];
const DrumRack = () => (
  <Device $w={114}>
    <DeviceHead><RoundButton $bg={C.yellow} aria-label="Device on" /><b>32 Pad Kit Rock</b><HeadIcons /></DeviceHead>
    <RackBody>
      <Dots>
        {range(1, 4).map((i) => <RoundButton key={i} $bg="#222" $fg="#ddd" aria-label={`View ${i}`}><Icon name="circle" size={3} /></RoundButton>)}
        <PushDown><MiniButton $w={5} $bg={C.yellow} aria-label="Auto select"><Icon name="follow" size={4} /></MiniButton></PushDown>
      </Dots>
      <MiniPads><i /><i /><i /><i /></MiniPads>
      <PadGrid>
        {pads.map((p, i) => (
          <Pad key={p}><button>{p}</button><PadKeys><PadKey>M</PadKey><PadKey $icon $on={[10, 12, 14].includes(i)} aria-label="Play pad"><Icon name="playFill" size={3} /></PadKey><PadKey>S</PadKey></PadKeys></Pad>
        ))}
      </PadGrid>
    </RackBody>
  </Device>
);

const DropZone = styled.div`
  flex: 1;
  display: grid;
  place-items: center;
  text-align: center;
  background: ${C.panel};
`;
const BusBody = styled.div`
  flex: 1;
  display: flex;
  flex-direction: column;
  border: 1px solid #aaa;
  background: ${C.panel};
  margin: 0 8px 3px 0;
`;
const ChainLine = styled.div`
  display: flex;
  align-items: center;
  gap: 2px;
  height: 7px;
  & > b { width: 32px; flex: none; height: 6px; line-height: 6px; padding-left: 1px; background: #d8e052; font-weight: 400; }
`;
const BusHead = styled.div`
  display: flex;
  align-items: center;
  justify-content: space-between;
  height: 12px;
  padding: 0 3px;
`;
const MasterBus = () => (
  <Device $w={119}>
    <DeviceHead><RoundButton $bg={C.yellow} aria-label="Device on" /><b>Master Bus</b><HeadIcons /></DeviceHead>
    <RackBody>
      <DotColumn colors={["#222", "#222", "#222", C.yellow]} />
      <BusBody>
        <BusHead><MiniButton $w={7} $border aria-label="Add chain"><Icon name="plus" size={4} /></MiniButton><Group $gap={2}><MiniButton $w={13} $border>Chain</MiniButton><MiniButton $w={11} $border $bg={C.cyan}>Hide</MiniButton></Group></BusHead>
        <ChainLine><b>Chain</b><span /><MiniButton $w={15} $bg={C.cyan}>0.0 dB</MiniButton><MiniButton $w={15}>C</MiniButton><MiniButton $w={6} $bg={C.yellow} aria-label="Active"><Icon name="headphone" size={4} /></MiniButton><MiniButton $w={6}>S</MiniButton><Icon name="swap" /></ChainLine>
        <DropZone>Drop Audio Effects Here</DropZone>
      </BusBody>
    </RackBody>
  </Device>
);
const TurnBody = styled.div`
  flex: 1;
  display: flex;
  flex-direction: column;
  align-items: center;
  border: 1px solid #999;
  background: ${C.panel};
  margin: 0 3px 2px 0;
  & > header { width: 100%; height: 12px; line-height: 8px; text-align: center; background: #d8d8d8; margin-bottom: 16px; }
`;
const TurnMe = () => (
  <Device $w={54}>
    <DeviceHead><RoundButton $bg={C.yellow} aria-label="Device on" /><b>On...</b><RoundButton $size={4} $bg="#6fb2e6" aria-label="Variation" /><Icon name="swap" /><Icon name="samples" /><HeadIcons /></DeviceHead>
    <RackBody>
      <DotColumn colors={[C.yellow, "#d8d8d8", "#d8d8d8", "#222", "#222", "#222"]} />
      <TurnBody><header>Turn Me</header><Knob value="27" at={0.21} size={17} /></TurnBody>
    </RackBody>
  </Device>
);

/* ---------- status ---------- */
const Status = styled.footer`
  display: flex;
  align-items: center;
  gap: 4px;
  padding: 0 3px 4px 4px;
  height: 12px;
`;
const StatusBox = styled.div<{ $w?: number }>`
  flex: ${(p) => (p.$w ? `0 0 ${p.$w}px` : "1")};
  height: 8px;
  display: flex;
  align-items: center;
  border: 1px solid ${C.dark};
  background: #b7b7b7;
  overflow: hidden;
  white-space: nowrap;
`;
const Crumb = styled.button<{ $dark?: boolean; $w: number }>`
  width: ${(p) => p.$w}px;
  height: 100%;
  flex: none;
  color: #111;
  background: ${(p) => (p.$dark ? "#707070" : "#b7b7b7")};
`;

export default function App() {
  return (
    <Page>
      <Global />
      <Shell>
        <TransportBar />
        <Main>
          <BrowserPane />
          <ArrangementView />
          <SideStrip>
            <RoundButton $size={7} $bg={C.yellow} aria-label="Arrangement view"><Icon name="lines" size={5} /></RoundButton>
            <RoundButton $size={7} aria-label="Session view"><Icon name="keys" size={4} /></RoundButton>
            <SideTrack>
              <i />
              {[0, 1, 2, 3].map((i) => <RoundButton key={i} $bg={i === 3 ? "#222" : C.yellow} $fg={i === 3 ? "#ddd" : C.ink} aria-label={`Section ${i + 1}`}><Icon name="lines" size={3} /></RoundButton>)}
            </SideTrack>
          </SideStrip>
        </Main>
        <DeviceView>
          <LevelStrip $midi />
          <BouncyNotes />
          <LevelStrip $midi />
          <KitRack />
          <DrumRack />
          <MasterBus />
          <LevelStrip />
          <TurnMe />
          <LevelStrip />
          <DropZone>Drop Audio Effects Here</DropZone>
        </DeviceView>
        <Status>
          <RoundButton $size={7} aria-label="Help"><Icon name="play" /></RoundButton>
          <StatusBox />
          <StatusBox $w={84}>
            <svg width="82" height="6" viewBox="0 0 82 6"><path d="M1 3h80M30 0v6" stroke="#999" strokeWidth="0.600" strokeDasharray="1 1" /></svg>
          </StatusBox>
          <StatusBox $w={102}>
            <Crumb $w={39} $dark>4-32 Pad Kit Rock</Crumb><Crumb $w={29}>Bouncy Notes</Crumb>
            <svg width="32" height="6" viewBox="0 0 32 6" fill="none" stroke="#777" strokeWidth="0.600"><path d="M4 1h8v2H4zM2 4h12M17 0v6M22 1h6v3h-6zM30 0v6" /><path d="M18 2h3" stroke={C.yellow} /></svg>
          </StatusBox>
          <RoundButton $size={8} aria-label="Toggle device view"><Icon name="home" /></RoundButton>
        </Status>
      </Shell>
    </Page>
  );
}
